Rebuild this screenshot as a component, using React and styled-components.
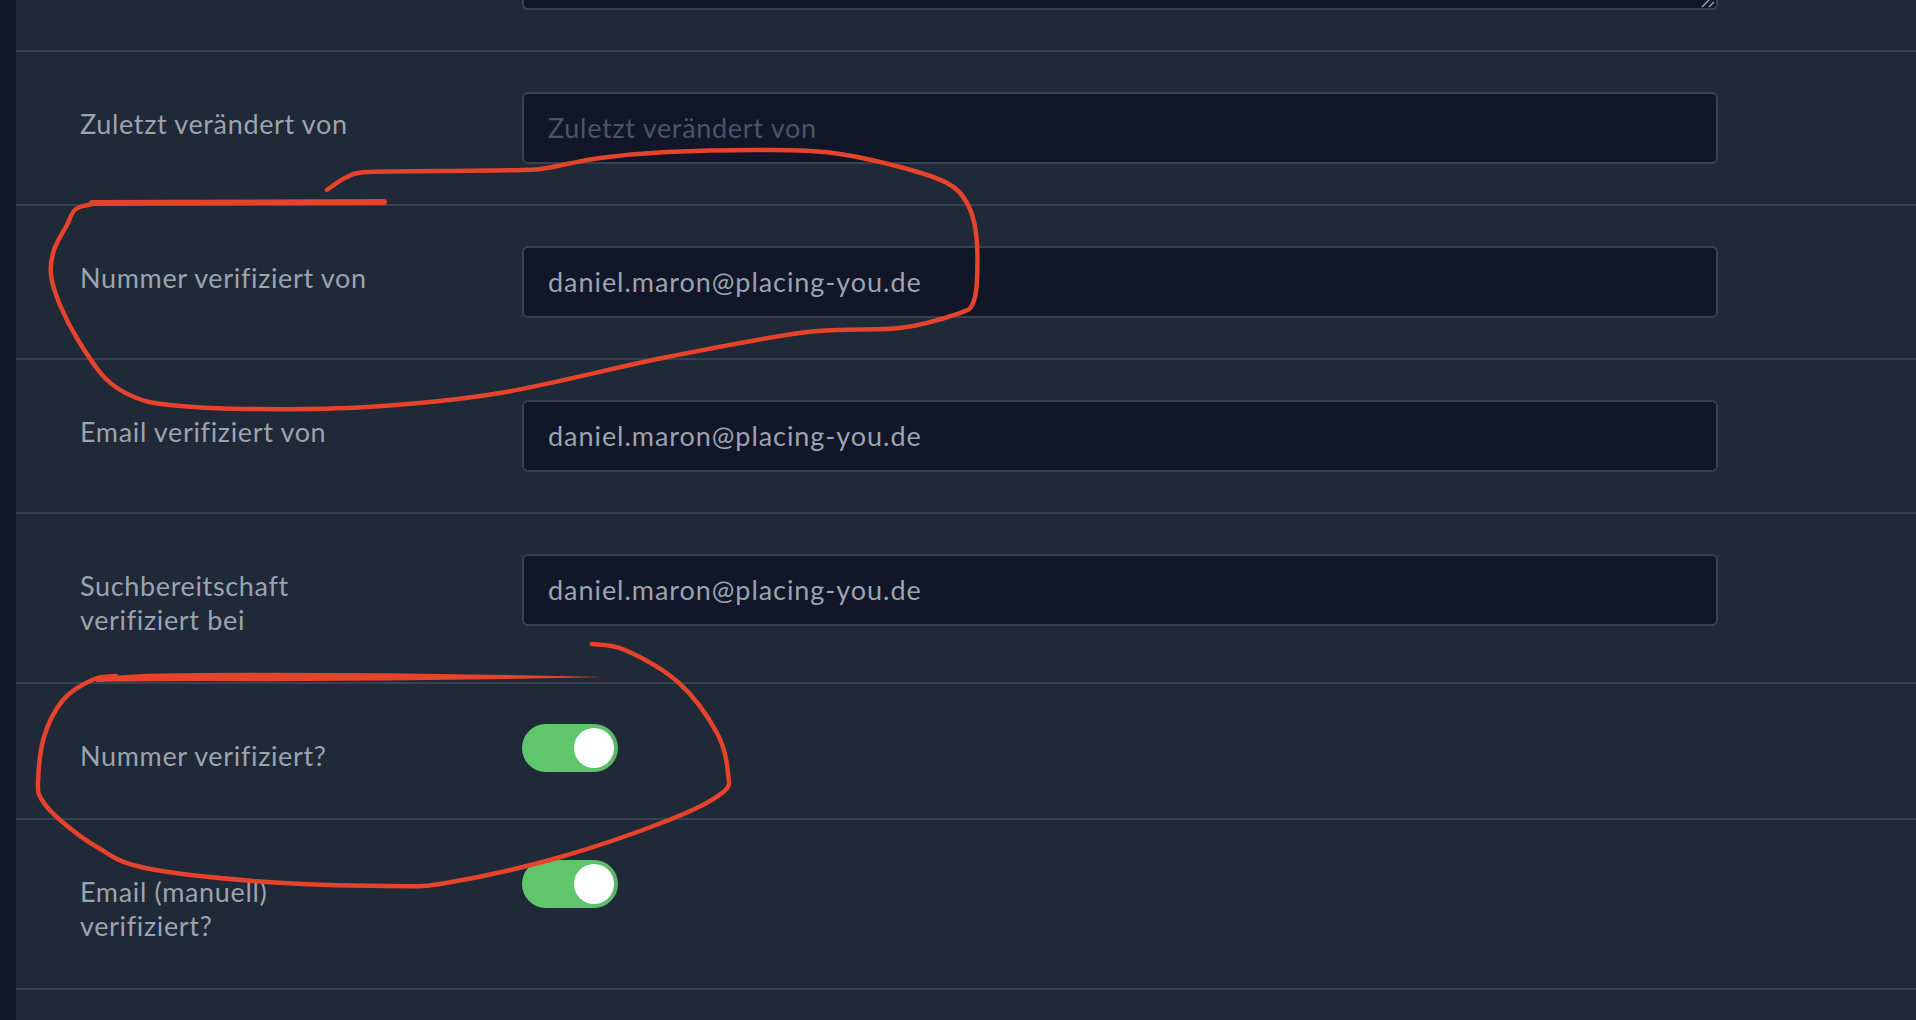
import React from "react";
import styled, { createGlobalStyle } from "styled-components";

const Global = createGlobalStyle`
  html, body { margin: 0; padding: 0; background: #1f2937; }
  body { font-family: "Lato", "Noto Sans", sans-serif; }
`;

const Page = styled.div`
  position: relative;
  display: flex;
  width: 1916px;
  height: 1020px;
  overflow: hidden;
  background: #1f2937;
`;

const Rail = styled.div`
  flex: 0 0 16px;
  background: #0f172a;
`;

const Form = styled.div`
  flex: 1;
  display: flex;
  flex-direction: column;
`;

const Row = styled.div`
  display: grid;
  grid-template-columns: 442px 1196px;
  align-items: start;
  padding: 40px 64px;
  border-bottom: 2px solid #374151;
`;

const TopRow = styled(Row)`
  height: 52px;
  box-sizing: border-box;
  padding-top: 0;
  padding-bottom: 41px;
  align-items: end;
  overflow: hidden;
`;

const Label = styled.label`
  display: block;
  width: 300px;
  padding: 15px 0 5px;
  font-size: 27px;
  line-height: 34px;
  letter-spacing: 0.65px;
  color: #9ca3af;
`;

const Field = styled.input`
  display: block;
  box-sizing: border-box;
  width: 100%;
  height: 72px;
  padding: 0 24px 2px;
  border: 2px solid #374151;
  border-radius: 6px;
  background: #111628;
  font: inherit;
  font-size: 27px;
  letter-spacing: 0.95px;
  color: #9ca3af;
  outline: none;
  &::placeholder { color: #4b5563; opacity: 1; letter-spacing: 0.7px; }
`;

const Notes = styled.div`
  box-sizing: border-box;
  width: 100%;
  height: 10px;
  border: 2px solid #374151;
  border-top: 0;
  border-radius: 0 0 6px 6px;
  background: #111628;
  position: relative;
`;

const Grip = styled.svg`
  position: absolute;
  right: 0;
  bottom: 0;
`;

const Toggle = styled.span`
  display: flex;
  justify-content: flex-end;
  align-items: center;
  box-sizing: border-box;
  width: 96px;
  height: 48px;
  padding: 4px;
  border-radius: 24px;
  background: linear-gradient(90deg, #5fc66c 70%, #5cb268 100%);
`;

const Knob = styled.span`
  width: 40px;
  height: 40px;
  border-radius: 50%;
  background: #fff;
`;

const Ink = styled.svg`
  position: absolute;
  inset: 0;
  pointer-events: none;
`;

const smooth = (p) => {
  let d = `M${p[0][0]} ${p[0][1]}`;
  for (let i = 0; i < p.length - 1; i++) {
    const a = p[Math.max(i - 1, 0)], b = p[i], c = p[i + 1], e = p[Math.min(i + 2, p.length - 1)];
    d += ` C${b[0] + (c[0] - a[0]) / 6} ${b[1] + (c[1] - a[1]) / 6} ${c[0] - (e[0] - b[0]) / 6} ${c[1] - (e[1] - b[1]) / 6} ${c[0]} ${c[1]}`;
  }
  return d;
};

const loopOne = [[327,190],[345,178],[367,172],[440,171],[522,170],[547,168],[600,158],[667,152],[767,150],[833,153],[900,167],[947,183],[967,203],[976,233],[977,280],[973,303],[960,313],[900,328],[807,332],[667,357],[500,393],[367,407],[244,409],[170,405],[134,397],[105,378],[78,340],[60,305],[51,275],[54,250],[67,225],[76,209],[98,203]];
const loopTwo = [[592,644],[625,650],[679,683],[717,733],[728,773],[722,793],[669,820],[557,858],[446,883],[388,886],[267,882],[145,868],[97,847],[60,820],[42,800],[38,783],[44,737],[63,700],[92,680],[116,676]];

const rows = [
  { label: "Zuletzt verändert von", placeholder: "Zuletzt verändert von" },
  { label: "Nummer verifiziert von", value: "daniel.maron@placing-you.de" },
  { label: "Email verifiziert von", value: "daniel.maron@placing-you.de" },
  { label: "Suchbereitschaft verifiziert bei", value: "daniel.maron@placing-you.de" },
  { label: "Nummer verifiziert?", toggle: true },
  { label: "Email (manuell) verifiziert?", toggle: true },
];

export default function App() {
  return (
    <Page>
      <Global />
      <Rail />
      <Form>
        <TopRow>
          <span />
          <Notes>
            <Grip width="16" height="10" viewBox="0 0 16 10">
              <path d="M2 9 L9 2 M9 9 L14 4" stroke="#a3a8b0" strokeWidth="1.4" fill="none" />
            </Grip>
          </Notes>
        </TopRow>
        {rows.map((r) => (
          <Row key={r.label}>
            <Label>{r.label}</Label>
            {r.toggle ? (
              <Toggle><Knob /></Toggle>
            ) : (
              <Field readOnly value={r.value} placeholder={r.placeholder} />
            )}
          </Row>
        ))}
      </Form>
      <Ink width="1916" height="1020" viewBox="0 0 1916 1020" fill="none">
        <path d={smooth(loopOne)} stroke="#e5432c" strokeWidth="4.5" strokeLinecap="round" />
        <path d="M92 203 L384 202" stroke="#e5432c" strokeWidth="6" strokeLinecap="round" />
        <path d={smooth(loopTwo)} stroke="#e5432c" strokeWidth="4.5" strokeLinecap="round" />
        <path d="M96 679 Q120 673 200 673 Q400 672 606 677 Q400 682 200 681 Q130 681 96 682 Z" fill="#e5432c" />
      </Ink>
    </Page>
  );
}
